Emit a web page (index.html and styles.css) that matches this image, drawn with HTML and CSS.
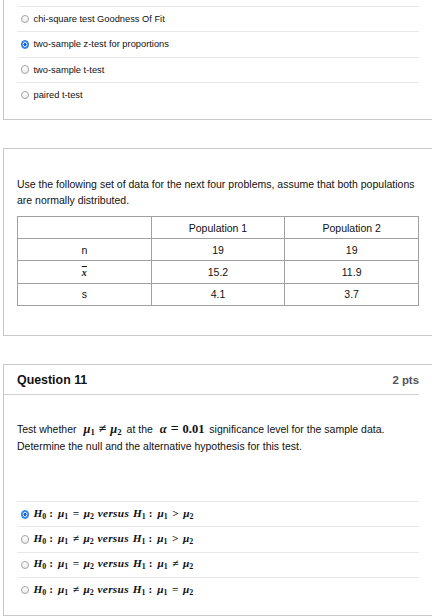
FILE: index.html
```html
<!DOCTYPE html>
<html>
<head>
<meta charset="utf-8">
<link rel="stylesheet" href="styles.css">
</head>
<body>
<div class="page">
  <div class="card card-top">
    <div class="answers">
      <div class="answer"><span class="radio"></span><span class="label">chi-square test Goodness Of Fit</span></div>
      <div class="answer"><span class="radio checked"></span><span class="label">two-sample z-test for proportions</span></div>
      <div class="answer"><span class="radio"></span><span class="label">two-sample t-test</span></div>
      <div class="answer"><span class="radio"></span><span class="label">paired t-test</span></div>
    </div>
  </div>

  <div class="card card-info">
    <p class="text">Use the following set of data for the next four problems, assume that both populations are normally distributed.</p>
    <table class="data">
      <tr><td></td><td>Population 1</td><td>Population 2</td></tr>
      <tr><td>n</td><td>19</td><td>19</td></tr>
      <tr><td><span class="xbar">x</span></td><td>15.2</td><td>11.9</td></tr>
      <tr><td>s</td><td>4.1</td><td>3.7</td></tr>
    </table>
  </div>

  <div class="card card-q">
    <div class="q-header">
      <span class="q-title">Question 11</span>
      <span class="q-pts">2 pts</span>
    </div>
    <div class="q-body">
      <p class="text">Test whether <span class="math q-math"><i>μ</i><sub>1</sub><span class="op">≠</span><i>μ</i><sub>2</sub></span> at the <span class="math q-math"><i>α</i><span class="op">=</span><b>0.01</b></span> significance level for the sample data. Determine the null and the alternative hypothesis for this test.</p>
      <div class="answers q-answers">
        <div class="answer"><span class="radio checked"></span><span class="math a-math"><i>H</i><sub>0</sub><span class="colon">:</span><i>μ</i><sub>1</sub><span class="op">=</span><i>μ</i><sub>2</sub> <i class="word">versus</i> <i>H</i><sub>1</sub><span class="colon">:</span><i>μ</i><sub>1</sub><span class="op">&gt;</span><i>μ</i><sub>2</sub></span></div>
        <div class="answer"><span class="radio"></span><span class="math a-math"><i>H</i><sub>0</sub><span class="colon">:</span><i>μ</i><sub>1</sub><span class="op">≠</span><i>μ</i><sub>2</sub> <i class="word">versus</i> <i>H</i><sub>1</sub><span class="colon">:</span><i>μ</i><sub>1</sub><span class="op">&gt;</span><i>μ</i><sub>2</sub></span></div>
        <div class="answer"><span class="radio"></span><span class="math a-math"><i>H</i><sub>0</sub><span class="colon">:</span><i>μ</i><sub>1</sub><span class="op">=</span><i>μ</i><sub>2</sub> <i class="word">versus</i> <i>H</i><sub>1</sub><span class="colon">:</span><i>μ</i><sub>1</sub><span class="op">≠</span><i>μ</i><sub>2</sub></span></div>
        <div class="answer"><span class="radio"></span><span class="math a-math"><i>H</i><sub>0</sub><span class="colon">:</span><i>μ</i><sub>1</sub><span class="op">≠</span><i>μ</i><sub>2</sub> <i class="word">versus</i> <i>H</i><sub>1</sub><span class="colon">:</span><i>μ</i><sub>1</sub><span class="op">=</span><i>μ</i><sub>2</sub></span></div>
      </div>
    </div>
  </div>
</div>
</body>
</html>
```

FILE: styles.css
```css
html, body {
  margin: 0;
  padding: 0;
  overflow: hidden;
  background: #fff;
}
body {
  font-family: "Liberation Sans", Arial, Helvetica, sans-serif;
  color: #111;
  width: 432px;
  height: 616px;
}
.page {
  padding-left: 3px;
}
.card {
  width: 470px;
  border: 1px solid #c8c8c8;
  border-right: none;
  box-sizing: border-box;
}
.card-top {
  border-top: none;
  padding: 6px 0 11.8px 13px;
}
.answers {
  width: 402px;
}
.answer {
  height: 25.3px;
  box-sizing: border-box;
  border-top: 1px solid #e8e8e8;
  display: flex;
  align-items: center;
}
.radio {
  width: 8.5px;
  height: 8.5px;
  box-sizing: border-box;
  border-radius: 50%;
  border: 1px solid #a4a4a4;
  background: linear-gradient(#ffffff, #ececec);
  margin-left: 3.5px;
  margin-right: 4.5px;
  flex: none;
}
.radio.checked {
  border-color: #2b7de9;
  background: radial-gradient(circle, #1b5fd0 0 1.3px, #cfe3ff 1.7px 2.2px, #3d8ff5 2.6px);
}
.label {
  font-size: 9.3px;
  line-height: 12px;
  color: #111;
}
.card-info {
  margin-top: 28px;
  padding: 26.7px 0 29px 13px;
}
.text {
  margin: 0;
  width: 405px;
  font-size: 10.5px;
  line-height: 16.6px;
  color: #111;
}
.data {
  margin-top: 7px;
  width: 402px;
  border-collapse: collapse;
  table-layout: fixed;
  border: 1px solid #8e8e8e;
}
.data td {
  border: 1px solid #a0a0a0;
  height: 21.3px;
  padding: 0;
  text-align: center;
  font-size: 10.5px;
  color: #111;
}
.xbar {
  font-family: "Liberation Serif", "Times New Roman", serif;
  font-weight: bold;
  font-style: italic;
  font-size: 10px;
  text-decoration: overline;
}
.card-q {
  margin-top: 28px;
}
.q-header {
  height: 29px;
  border-bottom: 1px solid #cfcfcf;
  box-sizing: content-box;
  display: flex;
  align-items: center;
  justify-content: space-between;
  width: 402px;
  padding-left: 13px;
}
.q-title {
  font-weight: bold;
  font-size: 12.4px;
  color: #111;
}
.q-pts {
  font-weight: bold;
  font-size: 11.4px;
  color: #555;
}
.q-body {
  padding: 26.3px 0 12.6px 13px;
}
.q-answers {
  margin-top: 46.6px;
}
.math {
  font-family: "Liberation Serif", "Times New Roman", serif;
  font-weight: bold;
  white-space: nowrap;
  line-height: 1;
}
.math i {
  font-style: italic;
}
.math sub {
  font-size: 0.7em;
  vertical-align: -0.25em;
  line-height: 1;
}
.q-math {
  font-size: 12.5px;
  margin: 0 2px 0 4px;
}
.q-math .op {
  margin: 0 4px;
  font-size: 1.1em;
}
.a-math {
  font-size: 11.3px;
  color: #111;
}
.a-math .colon {
  margin: 0 5px 0 3px;
}
.a-math .op {
  margin: 0 4.5px;
}
.a-math .word {
  margin: 0 1px;
  letter-spacing: 0.3px;
}
```
